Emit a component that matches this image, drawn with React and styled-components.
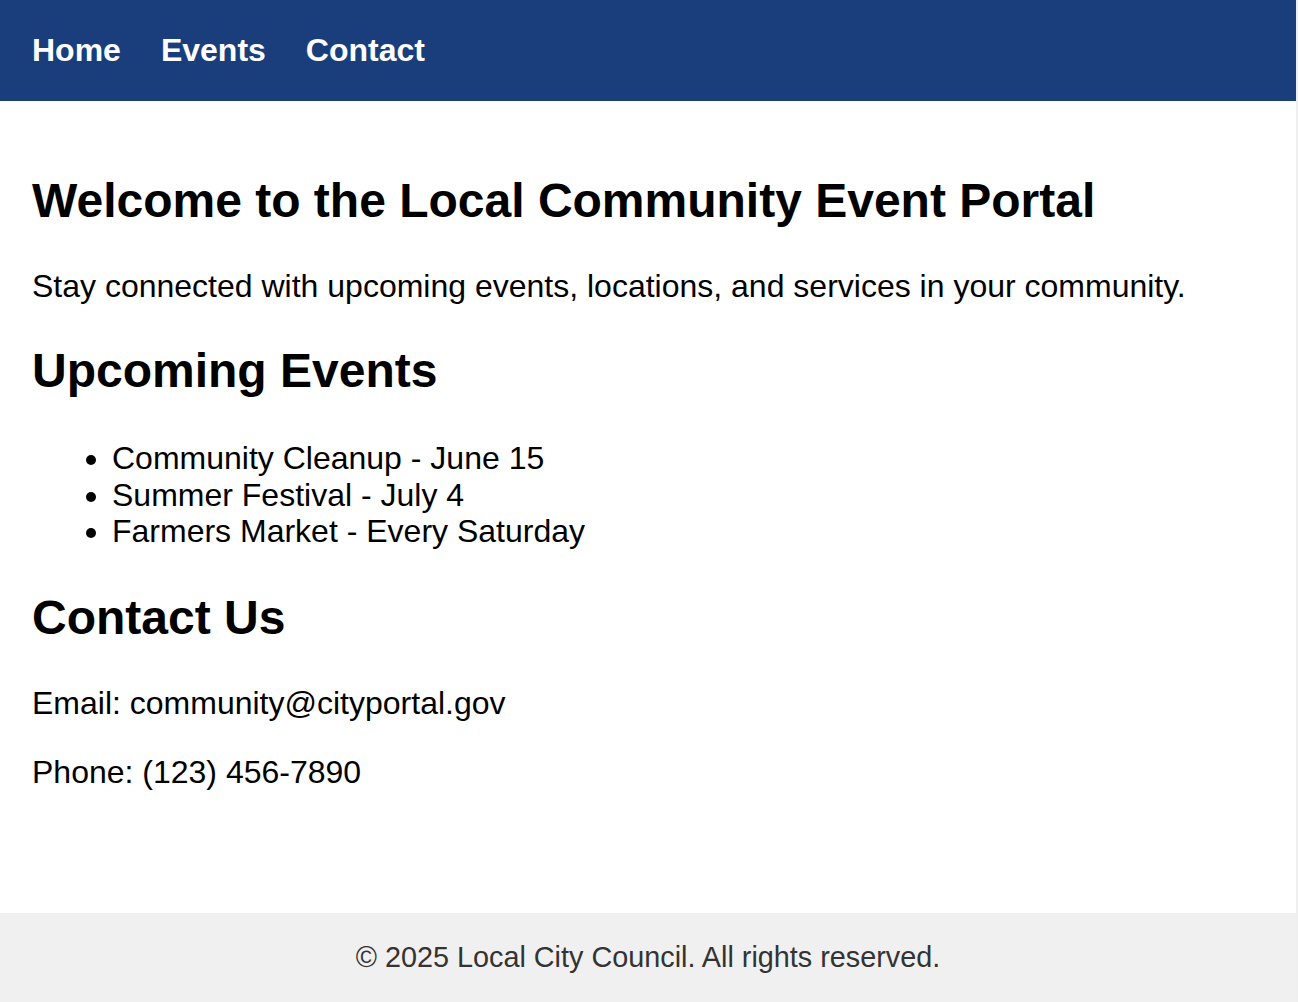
import React from 'react';
import styled, { createGlobalStyle } from 'styled-components';

const GlobalStyle = createGlobalStyle`
  html {
    background: #efefef;
  }
  body {
    margin: 0;
    font-family: 'Liberation Sans', Arial, Helvetica, sans-serif;
    font-size: 32px;
    color: #000;
  }
  #root {
    margin-right: 2px;
    background: #fff;
  }
`;

const events = [
  'Community Cleanup - June 15',
  'Summer Festival - July 4',
  'Farmers Market - Every Saturday',
];

const App = () => {
  return (
    <>
      <GlobalStyle />
      <Header>
        <Nav>
          <NavLink href='#home'>Home</NavLink>
          <NavLink href='#events'>Events</NavLink>
          <NavLink href='#contact'>Contact</NavLink>
        </Nav>
      </Header>
      <Main>
        <Section id='home'>
          <Title>Welcome to the Local Community Event Portal</Title>
          <Text>Stay connected with upcoming events, locations, and services in your community.</Text>
        </Section>
        <Section id='events'>
          <Title as='h2' $top={38} $bottom={42}>Upcoming Events</Title>
          <EventList>
            {events.map((item) => (
              <li key={item}>{item}</li>
            ))}
          </EventList>
        </Section>
        <Section id='contact'>
          <Title as='h2'>Contact Us</Title>
          <Text>Email: community@cityportal.gov</Text>
          <Text>Phone: (123) 456-7890</Text>
        </Section>
      </Main>
      <Footer>
        <p>© 2025 Local City Council. All rights reserved.</p>
      </Footer>
    </>
  );
};

export default App;

const Header = styled.header`
  background-color: #1a3e7c;
  padding: 32px;
`;

const Nav = styled.nav`
  display: flex;
  gap: 40px;
`;

const NavLink = styled.a`
  color: #fff;
  font-weight: bold;
  text-decoration: none;
  line-height: 36.8px;
`;

const Main = styled.main`
  padding: 32px;
`;

const Section = styled.section`
  display: block;
`;

const Title = styled.h1`
  font-size: 48px;
  font-weight: bold;
  margin: ${({ $top = 40 }) => $top}px 0 ${({ $bottom = 40 }) => $bottom}px;
  line-height: 55.2px;
`;

const Text = styled.p`
  margin: 32px 0;
  line-height: 36.8px;
`;

const EventList = styled.ul`
  margin: 32px 0;
  padding-left: 80px;
  line-height: 36.7px;
`;

const Footer = styled.footer`
  margin-top: 58px;
  background-color: #f0f0f0;
  color: #333;
  text-align: center;
  padding: 28px 32px 32px;
  font-size: 28.8px;
  p {
    margin: 0;
    line-height: 33.1px;
  }
`;
